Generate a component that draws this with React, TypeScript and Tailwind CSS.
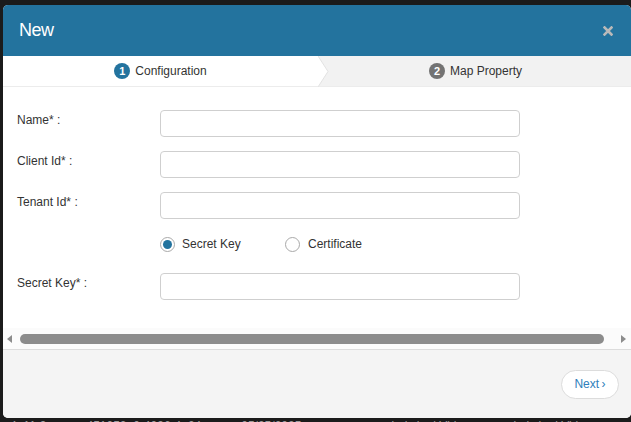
import React from "react";

const font = { fontFamily: '"Liberation Sans", Arial, sans-serif' };

function Field({ label }: { label: string }) {
  return (
    <div className="flex items-start h-[27px]">
      <div className="w-[143px] pt-[3px] text-[12px] leading-[14px] text-[#333]">{label}</div>
      <div className="w-[360px] h-[27px] rounded-[4px] border border-[#cfcfcf] bg-white" />
    </div>
  );
}

export default function App() {
  return (
    <div className="w-[631px] h-[422px] overflow-hidden bg-[#1b1b1b] pt-[5px] pl-[3px]" style={font}>
      <div className="w-[628px] h-[413px] rounded-[5px] overflow-hidden bg-white flex flex-col">
        {/* header */}
        <div className="h-[51px] bg-[#23739e] flex items-center justify-between pl-[16px] pr-[18px] shrink-0">
          <div className="text-white text-[18px] tracking-[-0.5px]">New</div>
          <svg width="10" height="10" viewBox="0 0 10 10">
            <path d="M1.5 1.5 L8.5 8.5 M8.5 1.5 L1.5 8.5" stroke="#b9b9b9" strokeWidth="2.6" strokeLinecap="square" />
          </svg>
        </div>
        {/* stepper */}
        <div className="relative h-[31px] flex shrink-0 border-b border-[#ececec]">
          <div className="w-[315px] bg-white flex items-center justify-center gap-[5px]">
            <span className="w-[16px] h-[16px] rounded-full bg-[#23739e] text-white text-[11px] font-bold flex items-center justify-center">1</span>
            <span className="text-[12px] text-[#333]">Configuration</span>
          </div>
          <div className="flex-1 bg-[#f2f2f2] flex items-center justify-center gap-[5px] pl-[2px]">
            <span className="w-[16px] h-[16px] rounded-full bg-[#737373] text-white text-[11px] font-bold flex items-center justify-center">2</span>
            <span className="text-[12px] text-[#333]">Map Property</span>
          </div>
          <svg className="absolute left-[315px] top-0" width="14" height="31" viewBox="0 0 14 31">
            <path d="M0 0 L10 15.5 L0 31 Z" fill="#ffffff" />
            <path d="M0 0 L10 15.5 L0 31" fill="none" stroke="#e2e2e2" strokeWidth="1" />
          </svg>
        </div>
        {/* body */}
        <div className="flex-1 flex flex-col bg-white">
          <div className="flex-1 pl-[14px] pt-[23px] flex flex-col">
            <Field label="Name* :" />
            <div className="h-[14px]" />
            <Field label="Client Id* :" />
            <div className="h-[14px]" />
            <Field label="Tenant Id* :" />
            <div className="flex items-center h-[50px] pl-[143px] text-[12px] text-[#333]">
              <div className="flex items-center gap-[7px] w-[125px]">
                <span className="w-[15px] h-[15px] rounded-full border border-[#a9a9a9] flex items-center justify-center bg-white">
                  <span className="w-[9px] h-[9px] rounded-full bg-[#23739e]" />
                </span>
                <span>Secret Key</span>
              </div>
              <div className="flex items-center gap-[8px]">
                <span className="w-[15px] h-[15px] rounded-full border border-[#a9a9a9] bg-white" />
                <span>Certificate</span>
              </div>
            </div>
            <div className="h-[4px]" />
            <Field label="Secret Key* :" />
          </div>
          {/* scrollbar */}
          <div className="h-[22px] bg-[#fbfbfb] flex items-center pl-[4px] pr-[5px] border-b border-[#dcdcdc]">
            <svg width="5" height="8" viewBox="0 0 5 8"><path d="M5 0 L0 4 L5 8 Z" fill="#8c8c8c" /></svg>
            <div className="flex-1 h-[10px] rounded-full bg-[#8c8c8c] ml-[8px] mr-[17px]" />
            <svg width="5" height="8" viewBox="0 0 5 8"><path d="M0 0 L5 4 L0 8 Z" fill="#8c8c8c" /></svg>
          </div>
        </div>
        {/* footer */}
        <div className="h-[68px] bg-[#f4f4f4] flex items-center justify-end pr-[12px] shrink-0">
          <div className="w-[58px] h-[29px] rounded-full border border-[#dcdcdc] bg-white flex items-center justify-center text-[12px] text-[#2f80bb]">
            Next&thinsp;›
          </div>
        </div>
      </div>
      <div className="flex text-[12px] text-[#9a9a9a] whitespace-nowrap leading-[14px] pt-[1px] gap-[40px] pl-[7px]">
        <span>4e11-9</span>
        <span>451052a0-4096-4e24</span>
        <span>05/25/2025</span>
        <span className="ml-[50px]">Lakshmi Virima</span>
        <span>Lakshmi Virima</span>
      </div>
    </div>
  );
}
